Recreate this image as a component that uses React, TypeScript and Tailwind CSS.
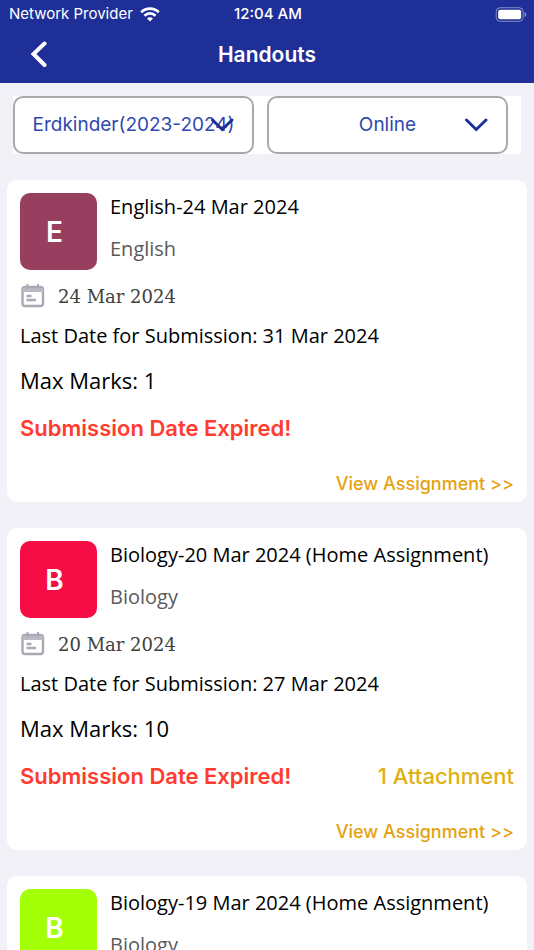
import { clsx } from "clsx";

interface Handout {
  id: number;
  title: string;
  subject: string;
  date: string;
  lastDate: string;
  maxMarks: number;
  tile: string;
  attachments: number;
}

const HANDOUTS: Handout[] = [
  {
    id: 1,
    title: "English-24 Mar 2024",
    subject: "English",
    date: "24 Mar 2024",
    lastDate: "31 Mar 2024",
    maxMarks: 1,
    tile: "bg-[#983f5f]",
    attachments: 0,
  },
  {
    id: 2,
    title: "Biology-20 Mar 2024 (Home Assignment)",
    subject: "Biology",
    date: "20 Mar 2024",
    lastDate: "27 Mar 2024",
    maxMarks: 10,
    tile: "bg-[#f70d46]",
    attachments: 1,
  },
  {
    id: 3,
    title: "Biology-19 Mar 2024 (Home Assignment)",
    subject: "Biology",
    date: "19 Mar 2024",
    lastDate: "26 Mar 2024",
    maxMarks: 10,
    tile: "bg-[#a2ff05]",
    attachments: 0,
  },
];

function WifiIcon() {
  return (
    <svg viewBox="0 0 20 15" className="h-[15px] w-5" fill="none" stroke="currentColor" strokeWidth="2.8" aria-hidden="true">
      <path d="M1.2 5.2a12.6 12.6 0 0 1 17.6 0" />
      <path d="M4.5 8.7a7.9 7.9 0 0 1 11 0" />
      <path d="M10 14.6 7 11.6a4.3 4.3 0 0 1 6 0z" fill="currentColor" stroke="none" />
    </svg>
  );
}

function BatteryIcon() {
  return (
    <svg viewBox="0 0 32 15" className="h-[15px] w-8" aria-hidden="true">
      <rect x="1.200" y="0.700" width="27" height="13.600" rx="4" fill="none" stroke="#fff" strokeOpacity="0.45" />
      <rect x="3.200" y="2.800" width="23" height="9.400" rx="2" fill="#fff" />
      <path d="M29.600 5v5c1-.4 1.700-1.400 1.700-2.500S30.600 5.400 29.600 5z" fill="#fff" fillOpacity="0.5" />
    </svg>
  );
}

function ChevronIcon() {
  return (
    <svg
      viewBox="0 0 24 14"
      className="pointer-events-none absolute top-1/2 right-5 h-[14px] w-6 -translate-y-1/2"
      fill="none"
      stroke="#1f2f98"
      strokeWidth="3"
      strokeLinecap="round"
      aria-hidden="true"
    >
      <path d="M2.500 2 12.200 11.500 22 2" />
    </svg>
  );
}

function CalendarIcon() {
  return (
    <svg viewBox="0 0 26 26" className="size-[26px]" fill="none" stroke="#a9a9b4" strokeWidth="2.4" aria-hidden="true">
      <rect x="2.500" y="4" width="20.500" height="19" rx="2.500" />
      <path d="M2.500 7h20.500" strokeWidth="4" stroke="#b9b9c3" />
      <path d="M7.500 1v5M18 1v5" strokeWidth="2" />
      <path d="M6.500 13h5M6.500 17h9.500" />
    </svg>
  );
}

function Filter({ label, options }: { label: string; options: string[] }) {
  return (
    <div className="relative flex-1">
      <select
        aria-label={label}
        className="h-[58px] w-full appearance-none rounded-[10px] border-2 border-[#a9a9a9] bg-white px-2 text-center text-[19px] text-[#2f49ae] [text-align-last:center]"
      >
        {options.map((option) => (
          <option key={option}>{option}</option>
        ))}
      </select>
      <ChevronIcon />
    </div>
  );
}

function HandoutCard({ handout }: { handout: Handout }) {
  return (
    <article className="rounded-[10px] bg-white p-[13px] pb-1">
      <div className="flex gap-[13px]">
        <div
          className={clsx(
            "flex size-[77px] shrink-0 items-center justify-center rounded-[10px] pr-2 text-[28px] font-semibold text-white",
            handout.tile
          )}
        >
          {handout.subject[0]}
        </div>
        <div className="min-w-0 font-['Open_Sans',sans-serif] text-[20px] leading-7">
          <h2 className="text-black">{handout.title}</h2>
          <p className="mt-[14px] text-[#5a5a5a]">{handout.subject}</p>
        </div>
      </div>
      <div className="mt-3 flex h-7 items-center gap-3">
        <CalendarIcon />
        <time className="font-['DejaVu_Serif',serif] text-[18px] text-[#404040]">{handout.date}</time>
      </div>
      <p className="mt-3 font-['Open_Sans',sans-serif] text-[20px] leading-7 text-black">
        Last Date for Submission: {handout.lastDate}
      </p>
      <p className="mt-4 font-['Open_Sans',sans-serif] text-[22px] leading-7 text-black">
        Max Marks: {handout.maxMarks}
      </p>
      <div className="mt-5 flex items-center justify-between text-[22px] leading-7">
        <p className="font-semibold text-[#ff3b30]">Submission Date Expired!</p>
        {handout.attachments > 0 && (
          <button type="button" className="font-medium text-[#dfb012]">
            {handout.attachments} Attachment
          </button>
        )}
      </div>
      <div className="mt-7 flex justify-end">
        <a href="#" className="text-[18px] leading-7 font-medium text-[#e5a20f]">
          View Assignment &gt;&gt;
        </a>
      </div>
    </article>
  );
}

export default function App() {
  return (
    <div className="h-screen overflow-hidden bg-[#f2f1f7] font-['Inter',sans-serif]">
      <header className="bg-[#1f2f98] text-white">
        <div className="grid h-7 grid-cols-[1fr_auto_1fr] items-center pr-[7px] pl-[9px] text-[15px]">
          <div className="flex items-center gap-[7px]">
            <span>Network Provider</span>
            <WifiIcon />
          </div>
          <span className="font-medium">12:04 AM</span>
          <div className="flex justify-end">
            <BatteryIcon />
          </div>
        </div>
        <div className="grid h-[55px] grid-cols-[1fr_auto_1fr] items-center px-[30px] pb-0.5">
          <button type="button" aria-label="Back" className="w-5">
            <svg viewBox="0 0 20 28" className="h-7 w-5" fill="none" stroke="currentColor" strokeWidth="4" strokeLinecap="round" aria-hidden="true">
              <path d="M14.500 2.500 3.500 13l11 11" />
            </svg>
          </button>
          <h1 className="text-[21px] font-semibold">Handouts</h1>
        </div>
      </header>
      <main>
        <div className="mx-[13px] mt-[13px] flex gap-[13px] bg-white pr-[13px]">
          <Filter label="Class" options={["Erdkinder(2023-2024)"]} />
          <Filter label="Mode" options={["Online", "Offline"]} />
        </div>
        <div className="mx-[7px] mt-[26px] flex flex-col gap-[26px]">
          {HANDOUTS.map((handout) => (
            <HandoutCard key={handout.id} handout={handout} />
          ))}
        </div>
      </main>
    </div>
  );
}
